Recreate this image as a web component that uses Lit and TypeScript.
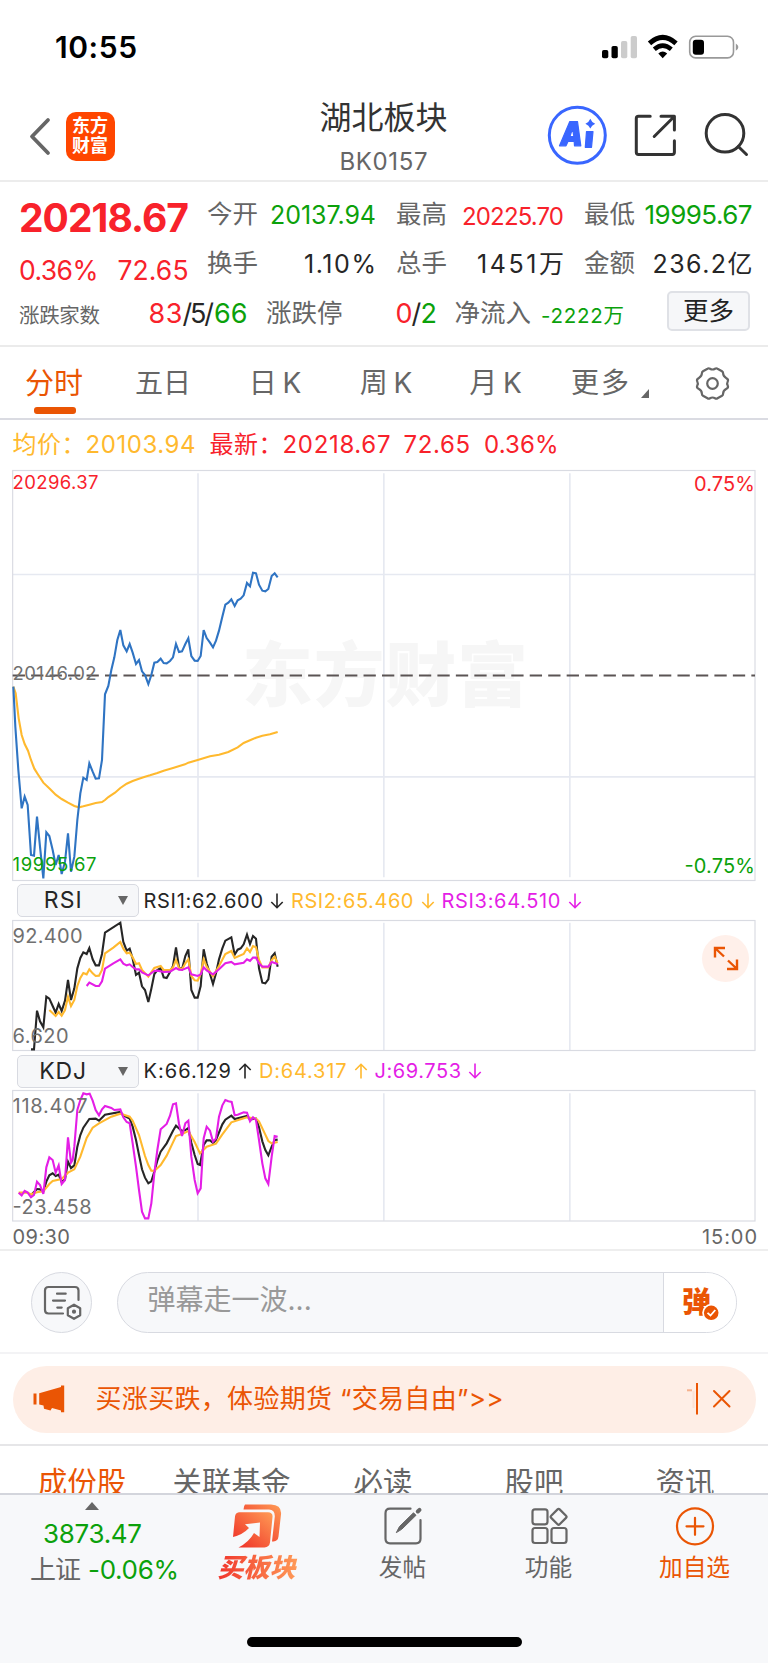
import { LitElement, html, svg, css } from "lit";
import { customElement, property, query } from "lit/decorators.js";

/** Text tracked so that it spans exactly the given width. */
@customElement("fit-text")
class FitText extends LitElement {
  static styles = css`
    :host { display: inline-block; flex: none; white-space: pre; text-align: left; }
    .run { display: inline-block; }
  `;
  @property({ type: Number }) w = 0;
  @property() text = "";
  @query(".run") run!: HTMLElement;
  firstUpdated() {
    const natural = this.run.getBoundingClientRect().width;
    const n = Array.from(this.text).length;
    this.style.width = this.w + "px";
    if (n > 1) this.style.letterSpacing = (this.w - natural) / (n - 1) + "px";
  }
  render() { return html`<span class="run">${this.text}</span>`; }
}

const ft = (text: string, w: number, cls = "") => html`<fit-text class=${cls} .text=${text} .w=${w}></fit-text>`;

const PRICE = "40,680 46,800 55,930 65,1045 74,1010 83,1035 93,1185 102,1187 111,1070 120,1160 130,1255 139,1117 148,1128 158,1170 167,1215 176,1185 185,1242 195,1205 204,1120 213,1235 223,1190 232,1080 241,1000 250,953 260,960 268,910 278,935 287,956 297,955 306,900 315,703 325,678 334,630 343,592 352,540 361,510 370,556 380,574 389,552 398,578 408,612 417,600 426,634 435,645 445,672 454,645 463,608 472,606 482,596 491,609 500,610 510,603 519,592 528,552 537,576 546,574 556,552 565,535 574,588 584,602 593,603 602,588 611,510 620,534 630,548 639,562 648,542 657,512 667,470 676,434 685,428 694,418 704,438 713,421 722,416 731,406 741,369 750,379 759,338 768,340 777,374 787,392 796,394 805,387 815,348 824,340 833,352";
const AVG = "40,680 47,700 56,775 65,825 74,852 84,872 93,900 103,926 113,942 130,968 150,987 167,1004 185,1017 204,1028 223,1038 237,1042 250,1039 268,1034 287,1029 306,1026 315,1020 325,1011 345,998 361,984 380,971 398,963 417,956 435,950 450,946 472,939 491,932 519,924 555,913 565,908 593,900 630,889 657,884 685,876 713,862 731,849 750,841 768,833 787,827 810,823 833,816";
const RSI1 = "93,508 102,508 111,392 120,424 130,442 139,350 148,356 158,378 167,398 176,372 185,393 195,362 204,300 213,360 223,325 232,265 241,234 250,217 260,222 268,204 278,238 287,256 297,256 306,222 315,158 361,128 370,186 380,212 389,206 398,236 408,285 417,278 426,319 435,330 445,366 454,326 463,282 472,270 482,264 491,292 500,294 510,276 519,258 528,202 537,262 546,268 556,228 565,208 574,330 584,353 593,353 602,318 611,208 620,250 630,282 639,312 648,280 657,238 667,205 676,182 694,172 704,224 713,209 722,205 731,193 741,164 750,192 759,168 768,176 777,265 787,308 796,310 805,298 815,230 824,220 833,260";
const RSI2 = "148,390 167,408 176,396 185,407 195,390 204,350 213,378 223,360 232,318 241,294 250,279 260,283 268,268 278,280 287,288 297,287 306,270 315,220 340,203 361,186 370,206 380,220 389,218 398,232 408,252 417,250 426,270 445,290 463,264 482,258 491,270 510,270 519,262 528,240 537,264 546,268 556,250 565,238 574,288 584,301 593,302 602,282 611,238 620,260 639,289 657,258 676,222 694,213 704,234 731,222 741,205 750,216 759,198 768,202 777,240 787,262 805,262 815,240 824,230 833,250";
const RSI3 = "260,318 268,308 287,318 297,318 306,304 315,266 340,250 361,238 370,251 380,256 389,253 398,261 408,268 417,268 426,277 445,286 463,273 472,272 491,276 510,275 528,264 537,269 546,270 565,262 574,283 593,288 602,283 611,262 620,271 639,283 657,268 676,250 694,246 704,253 731,248 741,238 750,243 759,233 768,233 777,250 787,260 805,260 815,246 833,252";
const KJ = "56,938 65,946 74,933 83,938 93,952 102,945 111,905 120,915 130,942 139,862 148,832 158,840 167,878 176,856 185,912 195,900 204,772 213,848 218,840 223,800 232,690 241,660 250,640 260,643 269,641 278,662 287,690 297,706 306,688 315,678 334,684 343,690 361,688 370,712 380,726 389,730 398,790 408,860 417,930 426,995 435,1015 445,1015 454,970 463,880 472,810 482,748 500,732 510,707 519,673 528,670 537,732 546,768 556,730 565,722 574,830 584,900 593,940 602,925 611,775 620,740 630,752 639,785 648,775 657,710 667,676 676,660 685,664 695,666 704,706 713,704 731,697 741,698 750,724 759,712 768,720 777,780 787,850 796,895 805,912 815,830 824,768 833,770";
const KK = "93,945 111,927 120,928 130,935 139,905 148,886 158,880 167,888 176,884 185,906 195,898 204,845 213,864 223,856 232,800 241,765 250,743 268,717 287,716 297,722 315,704 361,696 370,706 389,716 398,740 408,780 417,825 426,868 435,893 445,910 454,904 463,875 472,842 482,815 500,790 519,752 528,737 546,753 556,750 565,744 574,788 584,825 593,852 600,855 611,795 620,781 630,781 639,789 648,780 667,733 676,719 694,707 704,717 741,708 750,718 768,716 777,742 787,784 796,810 805,826 815,800 824,780 833,779";
const KD = "56,938 83,938 93,943 111,937 130,934 148,912 158,903 185,897 204,878 223,868 241,830 260,774 278,743 297,730 334,710 361,701 389,710 398,722 417,765 435,828 445,855 454,872 463,873 482,855 500,827 519,787 528,768 546,762 565,753 584,786 600,820 620,800 648,791 667,763 694,727 722,718 741,712 768,716 777,724 796,764 805,783 815,790 833,786";

const line = (points: string, cls: string) => svg`<polyline class="ln ${cls}" points=${points}></polyline>`;
/* Axis label: x and centre line in page pixels, drawn in the triple-density chart space. */
const lab = (t: string, x: number, cy: number, w: number, size: number, cls: string) =>
  svg`<text class=${cls} x=${x * 3} y=${(cy + size * 0.3635) * 3} font-size=${size * 3} textLength=${w * 3}>${t}</text>`;
const cols = (y1: number, y2: number) => svg`
  <path class="grid" d="M594 ${y1}V${y2}M1151.500 ${y1}V${y2}M1709.500 ${y1}V${y2}"/>`;

const arrow = (up: boolean) => html`<svg class="arrow" width="14" height="18" viewBox="0 0 14 18">
  <path d=${up ? "M7 16.500V2.500M1.300 8L7 2.300L12.700 8" : "M7 1.500V15.500M1.300 10L7 15.700L12.700 10"}
    fill="none" stroke="currentColor" stroke-width="1.600"/></svg>`;

@customElement("app-root")
class AppRoot extends LitElement {
  static styles = css`
    :host { display: block; width: 768px; height: 1663px; overflow: hidden; background: #fff; color: #333;
      font-family: Inter, "Noto Sans CJK SC", sans-serif; line-height: 1; }
    * { box-sizing: border-box; }
    svg { display: block; flex: none; overflow: visible; }
    .row { display: flex; align-items: center; }
    .red { color: #f8222b; fill: #f8222b; } .green { color: #0ba10b; fill: #0ba10b; }
    .amber { color: #ffb92e; fill: #ffb92e; } .pink { color: #e41ee6; fill: #e41ee6; }
    .gray { color: #666; fill: #707070; } .ink { color: #262626; }

    .status { height: 94px; padding: 0 29px 0 55px; justify-content: space-between; }
    .clock { font-size: 30px; font-weight: 600; color: #000; }
    .head { height: 88px; border-bottom: 2px solid #ececec; display: grid; grid-template-columns: 245px 219px 1fr; padding: 0 19px 0 29px; }
    .headl { display: flex; align-items: center; padding-bottom: 4px; gap: 15.500px; }
    .brand { width: 49px; height: 49px; border-radius: 10px; background: #ff4600; color: #fff; font-weight: 700; font-size: 18px;
      line-height: 20.500px; text-align: center; padding-top: 4px; }
    .headc { text-align: center; }
    .title { font-size: 32px; line-height: 44px; padding-top: 2px; }
    .code { font-size: 24px; line-height: 40px; color: #666; padding-top: 2px; }
    .headr { display: flex; justify-content: flex-end; }

    .quote { height: 165px; display: grid; grid-template-columns: 187px 189px 188px 188.500px; grid-template-rows: 56px 42px 58px;
      padding: 4px 0 0 0; border-bottom: 2px solid #ebebeb; }
    .left { grid-row: 1 / span 2; padding: 8px 0 0 19px; }
    .price { font-size: 39px; font-weight: 700; line-height: 48px; }
    .chg { display: flex; gap: 19px; font-size: 26.500px; line-height: 34px; margin-top: 11px; }
    .cell { display: flex; align-items: center; justify-content: space-between; padding-left: 20px; }
    .k { font-size: 25.500px; color: #666; }
    .v25 { font-size: 25px; padding-top: 3px; } .v24 { font-size: 24px; padding-top: 5px; } .v26 { font-size: 26px; padding-top: 2px; }
    .r3 { grid-column: 1 / -1; display: flex; align-items: center; padding-left: 19px; }
    .s20 { font-size: 20.500px; padding-top: 6px; }
    .s27 { font-size: 27px; }
    .breadth { margin-left: 48.500px; display: flex; margin-right: 18.500px; }
    .limit { display: flex; margin-left: 53px; margin-right: 19px; }
    .flow { margin-left: 10px; }
    .more { margin-left: 43px; width: 83px; height: 40px; border: 2px solid #dfe1e6; border-radius: 5px; background: #f6f7f9; margin-top: -4px;
      font-size: 25.500px; line-height: 36px; text-align: center; color: #222; }

    .tabs { height: 73px; display: grid; grid-template-columns: 108px 110px 114px 108px 111px 118px 1fr;
      border-bottom: 2px solid #dadbe2; font-size: 28px; color: #666; }
    .tab { display: flex; justify-content: center; line-height: 73px; word-spacing: -2px; }
    .on { color: #ea5504; position: relative; font-size: 29px; }
    .on::after { content: ""; position: absolute; width: 42px; height: 6.500px; border-radius: 3px; background: #ea5504; left: 34px; top: 60px; }
    .corner { width: 0; height: 0; border-left: 8px solid transparent; border-bottom: 9px solid #666; margin: 42px 0 0 12px; }
    .gear { padding: 19px 0 0 26px; }

    .avg { height: 50px; padding-left: 12.500px; font-size: 24px; line-height: 52px; }
    .sp1 { margin-left: 14px; } .sp2 { margin-left: 13px; }

    .ln { fill: none; stroke-width: 6.300; stroke-linejoin: miter; }
    .blue { stroke: #2f74c3; } .la { stroke: #ffb92e; } .lk { stroke: #262626; } .lp { stroke: #e41ee6; }
    .grid { fill: none; stroke: #e6e9f1; stroke-width: 5; }
    .frame { fill: none; stroke: #d9dbe2; stroke-width: 3.500; }
    .dash { stroke: #5b5454; stroke-width: 6.500; stroke-dasharray: 36.900 18.500; }
    .wm { font-weight: 900; fill: #f6f6f6; }

    .ind { height: 39px; padding-left: 16.500px; font-size: 20px; }
    .ind.b { height: 38px; }
    .pick { width: 122.500px; height: 33px; border: 1.500px solid #d8dae1; border-radius: 5px; background: #f6f7f9; display: flex; align-items: center;
      font-size: 23px; color: #262626; margin-right: 4.500px; padding-right: 10px; }
    .name { flex: 1; display: flex; justify-content: center; padding-right: 10px; }
    .arrow { margin: 0 7px 0 7px; }
    .stage { position: relative; }
    .expand { position: absolute; right: 19px; top: 15px; width: 47px; height: 47px; border-radius: 50%; background: #fff0ea; }

    .axis { height: 29px; padding: 3px 11px 0 12.500px; font-size: 20px; display: flex; justify-content: space-between; align-items: center; border-bottom: 2px solid #eee; }

    .dm { height: 103px; border-bottom: 2px solid #f3f3f5; display: flex; padding: 20.500px 31px 0 31px; gap: 24.500px; }
    .round { width: 61px; height: 61px; border-radius: 50%; background: #f7f8fa; border: 1.500px solid #d8dae1; }
    .round svg { margin: -1.500px; }
    .pill { flex: 1; height: 61px; border: 1.500px solid #d8dae1; border-radius: 31px; overflow: hidden; display: flex; background: #f7f8fa; }
    .ph { flex: 1; font-size: 28px; line-height: 54px; color: #999; padding-left: 30px; }
    .send { width: 73px; border-left: 1.500px solid #d8dae1; background: #fff; }
    .send text { font-weight: 900; fill: #ea5504; font-size: 29px; }

    .promo { height: 92px; border-bottom: 2px solid #e6e6e8; padding: 11.500px 12px 0 12.500px; }
    .ad { height: 67.500px; border-radius: 34px; background: #feeee6; color: #ea5504; font-size: 26px; padding-left: 20px; padding-right: 25px; }
    .adtext { margin-left: 31px; }
    .cut { margin-left: auto; }

    .subs { height: 47px; overflow: hidden; display: grid; grid-template-columns: 164px 135px 168px 134px 168px; font-size: 29.500px; line-height: 72px; color: #666; }
    .sub { text-align: center; }
    .cur { color: #ea5504; }

    .bar { height: 171px; border-top: 2px solid #d3d5dc; background: #f7f8fa; }
    .items { height: 142px; display: grid; grid-template-columns: 184px 146px 146px 146px 146px; color: #666; }
    .item { display: flex; flex-direction: column; align-items: center; padding-top: 8.500px; }
    .cap { font-size: 23.700px; line-height: 30px; margin: 5.500px 1px 0 0; }
    .hot { font-weight: 900; font-style: italic; font-size: 26px; background: linear-gradient(90deg, #f0312a, #ff9c58); -webkit-background-clip: text; color: transparent; padding: 0 3px; }
    .idx { padding: 7px 0 0 30px; display: flex; flex-direction: column; }
    .tri { width: 0; height: 0; border: 7px solid transparent; border-top: 0; border-bottom: 8px solid #666; margin-left: 55px; }
    .pt { font-size: 26px; line-height: 34px; margin: 6.500px 0 0 13px; }
    .szr { display: flex; gap: 7px; font-size: 26px; line-height: 34px; margin-top: 2px; }
    .home { width: 275px; height: 10px; border-radius: 5px; background: #000; margin: 0 auto; }
  `;

  render() {
    return html`
      <div class="status row">
        ${ft("10:55", 82, "clock")}
        <svg width="139" height="26" viewBox="600 34 139 26">
          <rect x="602" y="50" width="6.300" height="8.300" rx="1.800"/><rect x="611.500" y="46" width="6.300" height="12.300" rx="1.800"/>
          <rect x="621" y="41" width="6.300" height="17.300" rx="1.800" fill="#ccc"/><rect x="630.700" y="36" width="6.300" height="22.300" rx="1.800" fill="#ccc"/>
          <path d="M649.500 43.300Q662.700 31.500 676 43.300" fill="none" stroke="#000" stroke-width="5"/>
          <path d="M654.300 49.300Q662.700 42 671.300 49.300" fill="none" stroke="#000" stroke-width="4.500"/>
          <path d="M658.300 53.400Q662.700 49.600 667.200 53.400L662.700 58.300Z"/>
          <rect x="689.700" y="36.300" width="43.800" height="21.600" rx="6" fill="none" stroke="#999" stroke-width="1.600"/>
          <rect x="692.800" y="39.700" width="11.200" height="15" rx="3"/><path d="M735.800 43.500Q741 47 735.800 50.800Z" fill="#999"/>
        </svg>
      </div>
      <div class="head">
        <div class="headl">
          <svg width="21" height="37" viewBox="0 0 21 37"><path d="M19 2L3 18.500L19 35" fill="none" stroke="#666" stroke-width="3.800" stroke-linecap="round" stroke-linejoin="round"/></svg>
          <div class="brand">东方<br>财富</div>
        </div>
        <div class="headc"><div class="title">湖北板块</div><div class="code">${ft("BK0157", 88)}</div></div>
        <div class="headr">
          <svg width="202" height="88" viewBox="547 94 202 88">
            <circle cx="577.300" cy="135.300" r="28" fill="none" stroke="#3966ff" stroke-width="3"/>
            <path d="M569.800 121.500H577.500L580.800 145.800H574.500L574.200 141.500H568L566 145.800H559.500ZM572.500 128.500L569.900 136.600H573.900Z" fill="#3966ff" stroke="#3966ff" stroke-width="1.200" stroke-linejoin="round" fill-rule="evenodd"/>
            <path d="M586.500 131.500H593L591.500 147.300H585.300Z" fill="#3966ff" stroke="#3966ff" stroke-width="1.200" stroke-linejoin="round"/>
            <path d="M590.300 118.800Q591.600 122.400 595.200 123.700Q591.600 125 590.300 128.600Q589 125 585.400 123.700Q589 122.400 590.300 118.800Z" fill="#3966ff"/>
            <g fill="none" stroke="#333" stroke-width="3" stroke-linecap="round" stroke-linejoin="round">
              <path d="M650.200 116.300H638.500Q636.300 116.300 636.300 118.500V152.300Q636.300 154.500 638.500 154.500H672.200Q674.400 154.500 674.400 152.300V140.800M661 116.300H674.400V130M674 116.700L654.200 136.500"/>
              <circle cx="725" cy="133.300" r="18.800"/><path d="M738.300 146.500L746.500 154.500"/>
            </g>
          </svg>
        </div>
      </div>

      <div class="quote">
        <div class="left">
          <div class="price red">${ft("20218.67", 170)}</div>
          <div class="chg red">${ft("0.36%", 79.500)}${ft("72.65", 71)}</div>
        </div>
        <div class="cell"><span class="k">今开</span>${ft("20137.94", 106, "green v25")}</div>
        <div class="cell"><span class="k">最高</span>${ft("20225.70", 102, "red v24")}</div>
        <div class="cell"><span class="k">最低</span>${ft("19995.67", 108, "green v26")}</div>
        <div class="cell"><span class="k">换手</span>${ft("1.10%", 72, "ink v25")}</div>
        <div class="cell"><span class="k">总手</span>${ft("1451万", 87, "ink v25")}</div>
        <div class="cell"><span class="k">金额</span>${ft("236.2亿", 100, "ink v25")}</div>
        <div class="r3">
          ${ft("涨跌家数", 81, "gray s20")}
          <span class="breadth s27">${ft("83", 34, "red")}${ft("/5/", 31.500, "ink")}${ft("66", 33.500, "green")}</span>
          <span class="k">涨跌停</span>
          <span class="limit s27">${ft("0", 16, "red")}${ft("/", 9, "ink")}${ft("2", 15, "green")}</span>
          <span class="k">净流入</span>
          ${ft("-2222万", 83, "green s20 flow")}
          <span class="more">更多</span>
        </div>
      </div>

      <div class="tabs">
        <div class="tab on">分时</div><div class="tab">五日</div><div class="tab">日 K</div><div class="tab">周 K</div>
        <div class="tab">月 K</div><div class="tab">${ft("更多", 58)}<i class="corner"></i></div>
        <div class="gear"><svg width="35" height="35" viewBox="-17.500 -17.500 35 35" fill="none" stroke="#666" stroke-width="2.200" stroke-linejoin="round">
          <path d="M-5 -14.800Q-3.800 -15.600 -2.500 -14.800Q0 -13.200 2.500 -14.800Q3.800 -15.600 5 -14.800L9.500 -12.200Q10.600 -11.500 10.600 -10.200Q10.700 -7 13.600 -5.600Q16.200 -4.300 15.300 -2.300Q14 0 15.300 2.300Q16.200 4.300 13.600 5.600Q10.700 7 10.600 10.200Q10.600 11.500 9.500 12.200L5 14.800Q3.800 15.600 2.500 14.800Q0 13.200 -2.500 14.800Q-3.800 15.600 -5 14.800L-9.500 12.200Q-10.600 11.500 -10.600 10.200Q-10.700 7 -13.600 5.600Q-16.200 4.300 -15.300 2.300Q-14 0 -15.300 -2.300Q-16.200 -4.300 -13.600 -5.600Q-10.700 -7 -10.600 -10.200Q-10.600 -11.500 -9.500 -12.200Z"/><circle r="5.300"/></svg></div>
      </div>

      <div class="avg row">
        ${ft("均价：", 73, "amber")}${ft("20103.94", 110, "amber")}
        ${ft("最新：", 73, "red sp1")}${ft("20218.67", 108, "red")}${ft("72.65", 66.500, "red sp2")}${ft("0.36%", 74.500, "red sp1")}
      </div>

      <svg width="768" height="411" viewBox="0 30 2304 1233">
        <text class="wm" x="726" y="722" font-size="212" textLength="858">东方财富</text>
        ${cols(40, 1252)}
        <path class="grid" d="M38 343.500H2265M38 950.500H2265"/>
        <rect class="frame" x="38" y="31.500" width="2227" height="1230"/>
        <path class="dash" d="M38 646.500H2265"/>
        ${line(AVG, "la")}${line(PRICE, "blue")}
        ${lab("20296.37", 12.500, 482.500 - 460, 86, 18.500, "red")}
        ${lab("20146.02", 12.500, 673.500 - 460, 84, 18.500, "gray")}
        ${lab("19995.67", 12.500, 863.800 - 460, 84, 18.500, "green")}
        ${lab("0.75%", 694, 484 - 460, 61, 20, "red")}
        ${lab("-0.75%", 684.500, 865.500 - 460, 70.500, 20, "green")}
      </svg>

      <div class="ind row">
        <div class="pick"><span class="name">${ft("RSI", 38)}</span><svg width="10" height="9" viewBox="0 0 10 9"><path d="M0 0H10L5 9Z" fill="#666"/></svg></div>
        <span class="row ink">${ft("RSI1:62.600", 119.500)}${arrow(false)}</span>
        <span class="row amber">${ft("RSI2:65.460", 122.500)}${arrow(false)}</span>
        <span class="row pink">${ft("RSI3:64.510", 119)}${arrow(false)}</span>
      </div>
      <div class="stage">
        <svg width="768" height="132" viewBox="0 120 2304 396">
          ${cols(128, 510)}<rect class="frame" x="38" y="121.500" width="2227" height="390"/>
          ${line(RSI1, "lk")}${line(RSI2, "la")}${line(RSI3, "lp")}
          ${lab("92.400", 12.500, 55.700, 70, 20, "gray")}${lab("6.620", 12.500, 156, 56, 20, "gray")}
        </svg>
        <span class="expand"><svg width="47" height="47" viewBox="0 0 47 47" fill="none" stroke="#ea5504" stroke-width="2.400">
          <path d="M13 22.500V13H23M13.500 13.500L22 21.500M35 24.500V34H25M34.500 33.500L26 25.500"/></svg></span>
      </div>

      <div class="ind b row">
        <div class="pick"><span class="name">${ft("KDJ", 47)}</span><svg width="10" height="9" viewBox="0 0 10 9"><path d="M0 0H10L5 9Z" fill="#666"/></svg></div>
        <span class="row ink">${ft("K:66.129", 87.500)}${arrow(true)}</span>
        <span class="row amber">${ft("D:64.317", 87.500)}${arrow(true)}</span>
        <span class="row pink">${ft("J:69.753", 86.500)}${arrow(false)}</span>
      </div>
      <svg width="768" height="132" viewBox="0 630 2304 396">
        ${cols(640, 1022)}<rect class="frame" x="38" y="631.500" width="2227" height="391.500"/>
        ${line(KK, "lk")}${line(KD, "la")}${line(KJ, "lp")}
        ${lab("118.407", 12.500, 226, 75, 20, "gray")}${lab("-23.458", 12.500, 326.500, 79, 20, "gray")}
      </svg>
      <div class="axis gray">${ft("09:30", 57.500)}${ft("15:00", 55)}</div>

      <div class="dm">
        <div class="round"><svg width="61" height="61" viewBox="31 1272 61 61" fill="none" stroke="#666" stroke-width="2.200" stroke-linecap="round">
          <path d="M78.500 1301V1291.500Q78.500 1288 75 1288H48.500Q45 1288 45 1291.500V1311Q45 1314.500 48.500 1314.500H63M57 1294.700H65.700M53 1301.600H65M57.300 1308.600H61.700"/>
          <path d="M74 1305.700L80.200 1309.200V1316.300L74 1319.800L67.800 1316.300V1309.200Z" stroke-linejoin="round"/><circle cx="74" cy="1312.700" r="1" fill="#666"/></svg></div>
        <div class="pill">
          <div class="ph">弹幕走一波...</div>
          <div class="send"><svg width="72" height="58" viewBox="665 1273.500 72 58">
            <text x="683" y="1313">弹</text><circle cx="712.200" cy="1313.300" r="9" fill="#fff"/><circle cx="712.200" cy="1313.300" r="7.300" fill="#ea5504"/>
            <path d="M708.500 1313.300L711.500 1316L716.300 1310.500" fill="none" stroke="#fff" stroke-width="1.800"/></svg></div>
        </div>
      </div>

      <div class="promo"><div class="ad row">
        <svg width="32" height="28" viewBox="32.500 1386 32 28" fill="#ea5504"><path d="M33 1394.500H36V1405.500H33ZM38.700 1394.300L60.500 1388V1386.500H63.700V1413.200H60.500V1411.500L51.500 1409L50 1411.500L43.500 1409.800L43 1406.500L38.700 1405.500Z"/></svg>
        ${ft("买涨买跌，体验期货 “交易自由”>>", 408, "adtext")}
        <svg class="cut" width="43" height="32" viewBox="688 1384 43 32" fill="none" stroke="#ea5504" stroke-width="2">
          <path d="M687 1391.300H692" opacity=".4"/><path d="M693.500 1392V1409" opacity=".08"/><path d="M697 1384V1415.500"/><path d="M714 1392L729.500 1407.500M729.500 1392L714 1407.500" stroke-linecap="round"/></svg>
      </div></div>

      <div class="subs"><span class="sub cur">成份股</span><span class="sub">关联基金</span><span class="sub">必读</span><span class="sub">股吧</span><span class="sub">资讯</span></div>

      <div class="bar">
        <div class="items">
          <div class="idx"><i class="tri"></i><div class="pt green">${ft("3873.47", 99)}</div>
            <div class="szr">${ft("上证", 51)}${ft("-0.06%", 91, "green")}</div></div>
          <div class="item"><svg width="50" height="44" viewBox="232 1503.500 50 44">
            <defs><linearGradient id="g" x1="0" y1="1" x2="1" y2="0"><stop offset="0" stop-color="#ee2a25"/><stop offset="1" stop-color="#ff9c55"/></linearGradient></defs>
            <path d="M245 1504H271Q282 1504.500 281 1514L278.500 1536Q278 1540.500 273.500 1541H272L274.800 1516Q275 1509 269 1509H243.500Q244 1505 245 1504Z" fill="url(#g)"/>
            <path d="M239 1511.700H268Q273 1512 272.500 1516.500L270 1542Q269.300 1546.500 264.500 1547H238.500Q249 1541.500 254 1532.500L259.500 1536.500L260 1522L245 1523.800L249 1527.500Q243 1534 233 1536.500L235 1516Q235.500 1512 239 1511.700Z" fill="url(#g)"/></svg>
            <span class="cap hot">买板块</span></div>
          <div class="item"><svg width="40" height="44" viewBox="383.500 1503.500 40 44" fill="none" stroke="#666" stroke-width="2.200" stroke-linecap="round">
            <path d="M411 1508.200H390.500Q386 1508.200 386 1512.700V1538.300Q386 1542.800 390.500 1542.800H416.500Q421 1542.800 421 1538.300V1519.500"/>
            <path d="M397 1531.800L400 1526L414 1512.300L416.500 1514.800L402.500 1528.500Z" fill="#666" stroke-width="1"/><path d="M418.300 1511L420 1509.300" stroke-width="4"/></svg><span class="cap">发帖</span></div>
          <div class="item"><svg width="38" height="44" viewBox="530 1503.500 38 44" fill="none" stroke="#666" stroke-width="2.200" stroke-linejoin="round">
            <rect x="532.500" y="1508.800" width="15" height="15" rx="2.500"/><rect x="532.500" y="1527.500" width="15" height="15" rx="2.500"/><rect x="551.500" y="1527.500" width="15" height="15" rx="2.500"/>
            <rect x="552.600" y="1510.300" width="12" height="12" rx="1.500" transform="rotate(45 558.600 1516.300)"/></svg><span class="cap">功能</span></div>
          <div class="item"><svg width="40" height="44" viewBox="675 1503.500 40 44" fill="none" stroke="#ea5504" stroke-width="2.200" stroke-linecap="round">
            <circle cx="695" cy="1525.800" r="18"/><path d="M686.500 1525.800H703.500M695 1517.300V1534.300"/></svg><span class="cap cur">加自选</span></div>
        </div>
        <div class="home"></div>
      </div>
    `;
  }
}
